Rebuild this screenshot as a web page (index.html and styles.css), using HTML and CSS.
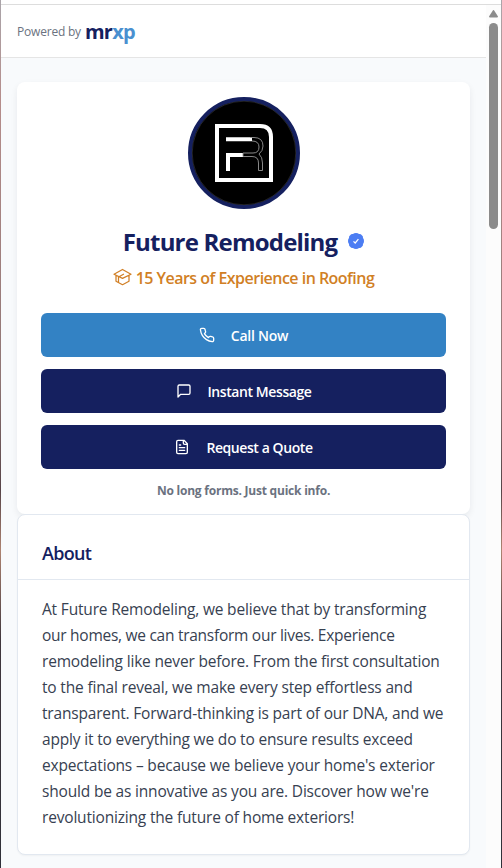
FILE: index.html
```html
<!DOCTYPE html>
<html lang="en">
<head>
<meta charset="utf-8">
<title>Future Remodeling</title>
<link rel="stylesheet" href="styles.css">
</head>
<body>
<div class="window">
  <div class="edge"></div>
  <div class="page">
    <header class="topbar"><span class="powered">Powered by</span><span class="brand">mr<span class="brand-accent">xp</span></span></header>
    <main class="content">
      <section class="card profile">
        <svg class="avatar" viewBox="0 0 112 112">
          <circle cx="56" cy="56" r="54" fill="#000" stroke="#15205f" stroke-width="4"/>
          <circle cx="56" cy="56" r="51.8" fill="none" stroke="#454545" stroke-width=".5"/>
          <path d="M29 29H72Q83 29 83 40V83H29Z" fill="none" stroke="#fff" stroke-width="4"/>
          <path d="M38 42.2H64M40 74V58H55" fill="none" stroke="#fff" stroke-width="4"/>
          <path d="M62 40.5H66Q75 40.5 75 49Q75 54 71 57Q74.5 60 74.5 66V73.5H70.5V66Q70.5 59.5 64 59.5H55V56H65Q71 56 71 50Q71 44 64 44" fill="none" stroke="#969696" stroke-width=".9"/>
        </svg>
        <h1 class="name"><span class="name-text">Future Remodeling</span>
          <svg class="verified" viewBox="0 0 16 16"><path d="M8 0Q10 0 11 1Q13 .8 13.8 2.2Q15.2 3 15 5Q16 6 16 8Q16 10 15 11Q15.2 13 13.8 13.8Q13 15.2 11 15Q10 16 8 16Q6 16 5 15Q3 15.2 2.2 13.8Q.8 13 1 11Q0 10 0 8Q0 6 1 5Q.8 3 2.2 2.2Q3 .8 5 1Q6 0 8 0Z" fill="#4c7df3"/><path d="m5.5 8.3 1.7 1.7 3.2-3.9" fill="none" stroke="#fff" stroke-width="1.2"/></svg>
        </h1>
        <p class="experience">
          <svg class="cap" viewBox="0 0 19 18"><path d="M1 6.2 9.5 1.5 18 6.2 9.5 10.4ZM3 7.5V13.2L9.5 16.7 16 13.2V7.5M5.5 14V9L10.5 6.2" fill="none" stroke="currentColor" stroke-width="1.25" stroke-linejoin="round" stroke-linecap="round"/></svg>
          <span class="experience-text">15 Years of Experience in Roofing</span>
        </p>
        <div class="actions">
          <a class="button call"><svg class="icon" viewBox="0 0 24 24"><path d="M22 16.92v3a2 2 0 0 1-2.18 2 19.79 19.79 0 0 1-8.63-3.07 19.5 19.5 0 0 1-6-6 19.79 19.79 0 0 1-3.07-8.67A2 2 0 0 1 4.11 2h3a2 2 0 0 1 2 1.72 12.84 12.84 0 0 0 .7 2.81 2 2 0 0 1-.45 2.11L8.09 9.91a16 16 0 0 0 6 6l1.27-1.27a2 2 0 0 1 2.11-.45 12.84 12.84 0 0 0 2.81.7A2 2 0 0 1 22 16.92z"/></svg><span class="call-label">Call Now</span></a>
          <a class="button"><svg class="icon" viewBox="0 0 24 24"><path d="M21 15a2 2 0 0 1-2 2H7l-4 4V5a2 2 0 0 1 2-2h14a2 2 0 0 1 2 2z"/></svg><span class="label">Instant Message</span></a>
          <a class="button"><svg class="icon" viewBox="0 0 24 24"><path d="M15 2H6a2 2 0 0 0-2 2v16a2 2 0 0 0 2 2h12a2 2 0 0 0 2-2V7zM14 2v4a2 2 0 0 0 2 2h4M10 9H8M16 13H8M16 17H8"/></svg><span class="label">Request a Quote</span></a>
        </div>
        <p class="note">No long forms. Just quick info.</p>
      </section>
      <section class="card about">
        <h2 class="about-title">About</h2>
        <p class="about-text">At Future Remodeling, we believe that by transforming<br><span class="tight">our homes, we can transform our lives. Experience</span><br>remodeling like never before. From the first consultation<br>to the final reveal, we make every step effortless and<br>transparent. Forward-thinking is part of our DNA, and we<br>apply it to everything we do to ensure results exceed<br>expectations – because we believe your home's exterior<br>should be as innovative as you are. Discover how we're<br>revolutionizing the future of home exteriors!</p>
      </section>
    </main>
  </div>
  <div class="scrollbar"><svg class="arrow" viewBox="0 0 9 8"><path d="M4.5 0Q5 0 5.5 1L9 6.5Q9 7.5 8 7.5H1Q0 7.5 0 6.5L3.5 1Q4 0 4.5 0Z" fill="#8b8b8b"/></svg><div class="thumb"></div></div>
  <div class="edge"></div>
</div>
</body>
</html>
```
FILE: styles.css
```css
* { box-sizing: border-box; }
body { margin: 0; background: #fff; font-family: "Open Sans", "Noto Sans", sans-serif; overflow: hidden; }
h1, h2, p { margin: 0; }
svg { display: block; flex: none; }
.window { display: flex; height: 868px; }
.edge { width: 1px; background: linear-gradient(#aaa5aa 0, #b58d8b 100px, #8f7675 380px, #574448 490px, #ad8371 550px, #40373d 640px, #303039 100%); }
.page { width: 485px; margin-top: 4px; border-top: 1px solid #ddd; background: #f8fafc; }
.topbar { display: flex; align-items: center; height: 53px; padding-left: 16px; background: #fff; border-bottom: 1px solid #e5e5e5; }
.powered { width: 68px; font-size: 12px; font-weight: 500; color: #6b7280; white-space: nowrap; letter-spacing: -.2px; }
.brand { padding-top: 2px; font-size: 20px; line-height: 28px; font-weight: 700; color: #15205f; letter-spacing: -.8px; }
.brand-accent { color: #4a90d0; }
.content { padding: 24px 16px 0; }
.card { width: 453px; background: #fff; border-radius: 8px; }
.profile { height: 432px; padding: 15px 24px 0; display: flex; flex-direction: column; align-items: center; box-shadow: 0 3px 7px #0f172a12; }
.avatar { width: 112px; height: 112px; }
.name { display: flex; align-items: center; gap: 11px; height: 36px; margin-top: 15px; font-size: 24px; line-height: 36px; color: #15205f; white-space: nowrap; }
.name-text { letter-spacing: -.8px; }
.verified { width: 16px; height: 16px; margin-top: -3px; }
.experience { display: flex; align-items: center; gap: 4px; height: 28px; margin-top: 3px; color: #d17f25; font-size: 16px; font-weight: 600; white-space: nowrap; }
.experience-text { padding-top: 1px; letter-spacing: -.52px; }
.cap { width: 19px; height: 18px; }
.actions { display: flex; flex-direction: column; gap: 12px; width: 405px; margin-top: 22px; }
.button { display: flex; align-items: center; justify-content: center; gap: 16px; height: 44px; border-radius: 6px; background: #15205f; color: #fff; font-size: 14px; font-weight: 600; white-space: nowrap; }
.call { background: #3382c4; }
.call-label { letter-spacing: -.25px; }
.label { letter-spacing: -.42px; }
.icon { width: 16px; height: 16px; fill: none; stroke: currentColor; stroke-width: 2; stroke-linecap: round; stroke-linejoin: round; }
.note { margin-top: 13px; font-size: 12px; line-height: 18px; font-weight: 700; letter-spacing: -.22px; color: #6b7280; }
.about { height: 341px; border: 1px solid #e2e8f0; box-shadow: 0 1px 2px #0000000a; }
.about-title { height: 65px; padding: 24px 24px 0; border-bottom: 1px solid #e2e8f0; font-size: 18px; line-height: 29px; font-weight: 600; color: #15205f; letter-spacing: -.7px; }
.about-text { padding: 16px 24px 0; font-size: 15.5px; line-height: 26px; letter-spacing: -.18px; color: #374151; white-space: nowrap; }
.tight { letter-spacing: -.27px; }
.scrollbar { width: 15px; margin-top: 4px; padding: 5px 0 0 3px; border-top: 1px solid #ddd; background: #fcfcfc; }
.arrow { width: 9px; height: 8px; }
.thumb { width: 9px; height: 206px; margin-top: 5px; border-radius: 5px; background: #8b8b8b; }
```
